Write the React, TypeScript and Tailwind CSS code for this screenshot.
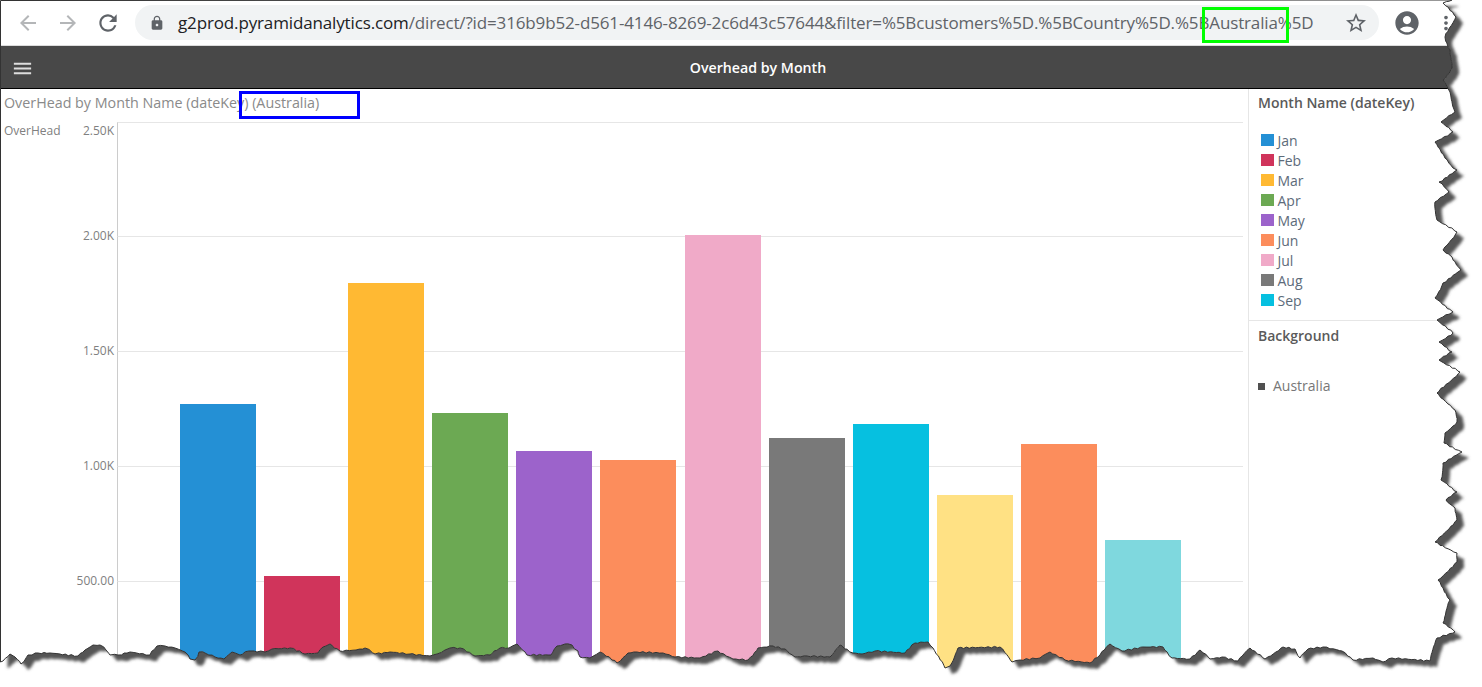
import { MdArrowBack, MdArrowForward, MdRefresh, MdLock, MdStarBorder, MdAccountCircle, MdMoreVert, MdMenu } from 'react-icons/md';

const bars = [
    { month: 'Jan', value: 1270, color: 'bg-[#2490d5]' },
    { month: 'Feb', value: 522, color: 'bg-[#d0345b]' },
    { month: 'Mar', value: 1796, color: 'bg-[#ffb933]' },
    { month: 'Apr', value: 1230, color: 'bg-[#6ca953]' },
    { month: 'May', value: 1065, color: 'bg-[#9c63cb]' },
    { month: 'Jun', value: 1026, color: 'bg-[#fc8d5c]' },
    { month: 'Jul', value: 2004, color: 'bg-[#f0aac8]' },
    { month: 'Aug', value: 1122, color: 'bg-[#797979]' },
    { month: 'Sep', value: 1183, color: 'bg-[#06c0e0]' },
    { month: 'Oct', value: 874, color: 'bg-[#ffe184]' },
    { month: 'Nov', value: 1096, color: 'bg-[#fc8d5c]' },
    { month: 'Dec', value: 678, color: 'bg-[#7fd8de]' },
];

const ticks = [
    { label: '2.50K', rowClass: 'h-[114px]', labelClass: 'mt-[0px]' },
    { label: '2.00K', rowClass: 'h-[115px]', labelClass: '-mt-[9px]' },
    { label: '1.50K', rowClass: 'h-[115px]', labelClass: '-mt-[9px]' },
    { label: '1.00K', rowClass: 'h-[115px]', labelClass: '-mt-[9px]' },
    { label: '500.00', rowClass: 'h-[115px]', labelClass: '-mt-[9px]' },
];

// rough outline of the torn screenshot edge, clockwise from the top right
const tornEdge = [
    [1452, 0], [1443, 3], [1456, 17], [1445, 37], [1450, 50], [1452, 68], [1443, 80], [1450, 92], [1455, 112],
    [1441, 122], [1453, 132], [1435, 142], [1453, 168], [1457, 170], [1439, 182], [1449, 192], [1435, 202],
    [1437, 220], [1457, 232], [1443, 250], [1452, 257], [1461, 270], [1443, 283], [1435, 298], [1453, 312],
    [1437, 320], [1453, 333], [1439, 342], [1452, 352], [1439, 360], [1460, 372], [1437, 393], [1455, 410],
    [1457, 422], [1445, 433], [1444, 443], [1462, 452], [1443, 463], [1441, 480], [1457, 492], [1446, 500],
    [1455, 508], [1457, 520], [1435, 542], [1457, 553], [1457, 562], [1438, 580], [1450, 600], [1443, 623],
    [1455, 632], [1437, 638], [1430, 661], [1392, 658], [1383, 662], [1373, 658], [1353, 660], [1342, 651],
    [1323, 647], [1308, 649], [1300, 658], [1295, 649], [1283, 647], [1265, 659], [1250, 648], [1238, 661],
    [1222, 657], [1210, 659], [1200, 650], [1190, 659], [1172, 658], [1163, 647], [1143, 647], [1122, 651],
    [1110, 644], [1100, 655], [1090, 663], [1065, 660], [1050, 652], [1040, 658], [1020, 660], [1012, 662],
    [1000, 647], [958, 648], [950, 666], [945, 668], [933, 648], [928, 642], [915, 643], [905, 653], [875, 651],
    [862, 654], [853, 653], [840, 645], [830, 657], [807, 656], [795, 657], [785, 649], [773, 646], [758, 648],
    [748, 660], [733, 659], [718, 651], [700, 658], [675, 657], [663, 653], [637, 652], [628, 653], [617, 663],
    [600, 652], [590, 658], [580, 657], [578, 651], [572, 645], [565, 644], [557, 646], [551, 655], [527, 655],
    [517, 644], [509, 648], [500, 648], [490, 655], [475, 656], [460, 648], [450, 648], [445, 650], [437, 654],
    [430, 656], [410, 654], [390, 652], [375, 654], [365, 648], [356, 650], [340, 651], [330, 644], [323, 647],
    [318, 653], [305, 654], [290, 648], [272, 649], [265, 652], [254, 651], [249, 651], [240, 655], [232, 652],
    [224, 659], [215, 657], [205, 653], [199, 652], [195, 660], [190, 659], [185, 652], [175, 648], [165, 646],
    [157, 646], [150, 655], [130, 652], [118, 655], [110, 655], [106, 650], [100, 645], [93, 645], [85, 650],
    [78, 656], [60, 654], [50, 653], [38, 653], [28, 655], [21, 664], [15, 657], [10, 654], [3, 661], [0.5, 662],
];

function buildEdgePath() {
    let d = 'M0.5 0.5';
    let n = 0;
    tornEdge.forEach(([x, y], i) => {
        if (i > 0) {
            const [px, py] = tornEdge[i - 1];
            const steps = Math.floor(Math.hypot(x - px, y - py) / 3);
            for (let s = 1; s < steps; s++) {
                n++;
                const jx = Math.sin(n * 12.9) * 0.7;
                const jy = Math.sin(n * 78.2) * 0.7;
                d += ` L${(px + ((x - px) * s) / steps + jx).toFixed(1)} ${(py + ((y - py) * s) / steps + jy).toFixed(1)}`;
            }
        }
        d += ` L${x} ${y}`;
    });
    return d + ' Z';
}

function TornEdge() {
    const edge = buildEdgePath();
    return (
        <svg className="absolute left-0 top-0 pointer-events-none" width="1482" height="687" viewBox="0 0 1482 687">
            <defs>
                <clipPath id="outside">
                    <path clipRule="evenodd" d={`M0 0H1482V687H0Z ${edge}`} />
                </clipPath>
                <filter id="soft" x="-5%" y="-5%" width="110%" height="110%">
                    <feGaussianBlur stdDeviation="1.8" />
                </filter>
            </defs>
            <path fillRule="evenodd" fill="#ffffff" d={`M0 0H1482V687H0Z ${edge}`} />
            <g clipPath="url(#outside)">
                <path d={edge} fill="#555555" filter="url(#soft)" transform="translate(7 6)" />
            </g>
            <path d={edge} fill="none" stroke="#333333" strokeWidth="1" />
        </svg>
    );
}

function BrowserBar() {
    return (
        <div className="h-[46px] flex items-center border-b border-[#dcdcdc] bg-white text-[#5f6368]">
            <MdArrowBack size={24} className="ml-[16px] text-[#b4b6b8]" />
            <MdArrowForward size={24} className="ml-[16px] text-[#b4b6b8]" />
            <MdRefresh size={26} className="ml-[15px]" />
            <div className="ml-[14px] h-[35px] w-[1244px] rounded-full bg-[#f1f3f4] flex items-center">
                <MdLock size={16} className="ml-[14px]" />
                <div className="ml-[13px] flex-1 whitespace-nowrap text-[17px] tracking-[-0.14px]">
                    <span className="text-[#202124]">g2prod.pyramidanalytics.com</span>
                    <span>/direct/?id=316b9b52-d561-4146-8269-2c6d43c57644&amp;filter=%5Bcustomers%5D.%5BCountry%5D.%5BAustralia%5D</span>
                </div>
                <MdStarBorder size={24} className="mr-[11px]" />
            </div>
            <MdAccountCircle size={28} className="ml-[14px]" />
            <MdMoreVert size={22} className="ml-[14px]" />
        </div>
    );
}

function Chart() {
    return (
        <div className="w-[1248px] shrink-0 pr-[5px]">
            <div className="h-[33px] pt-[4px] pl-[4px] text-[14.3px] leading-[20px] text-[#8a8a8a] whitespace-nowrap">
                OverHead by Month Name (dateKey) (Australia)
            </div>
            <div className="relative">
                <div className="absolute left-[4px] top-[1px] text-[12px] leading-[16px] text-[#808080]">OverHead</div>
                {ticks.map((tick) => (
                    <div key={tick.label} className={`flex ${tick.rowClass}`}>
                        <div className={`w-[117px] pr-[3px] text-right text-[12px] leading-[18px] text-[#808080] ${tick.labelClass}`}>
                            {tick.label}
                        </div>
                        <div className="flex-1 border-l border-t border-l-[#cccccc] border-t-[#e6e6e6]" />
                    </div>
                ))}
                <div className="absolute bottom-0 left-[180px] flex items-end gap-[8.1px]">
                    {bars.map((bar) => (
                        <div
                            key={bar.month}
                            className={`w-[76px] ${bar.color}`}
                            style={{ height: 115 + (bar.value - 500) * 0.23 }}
                        />
                    ))}
                </div>
            </div>
        </div>
    );
}

function Legend() {
    return (
        <div className="flex-1 border-l border-[#e6e6e6]">
            <div className="h-[232px] border-b border-[#e6e6e6]">
                <div className="pl-[9px] pt-[4px] text-[14px] leading-[20px] font-semibold text-[#5a5a5a] whitespace-nowrap">
                    Month Name (dateKey)
                </div>
                <div className="mt-[17px] pl-[12px] flex flex-col">
                    {bars.slice(0, 9).map((bar) => (
                        <div key={bar.month} className="h-[20px] flex items-center gap-[3.5px] text-[14px] text-[#5d6b7a]">
                            <span className={`w-[13px] h-[12px] ${bar.color}`} />
                            {bar.month}
                        </div>
                    ))}
                </div>
            </div>
            <div className="pl-[9px] pt-[5px] text-[14px] leading-[20px] font-semibold text-[#5a5a5a]">Background</div>
            <div className="mt-[30px] pl-[9px] flex items-center gap-[8px] text-[14px] leading-[20px] text-[#777777]">
                <span className="w-[7px] h-[7px] bg-[#505050]" />
                Australia
            </div>
        </div>
    );
}

export default function App() {
    return (
        <div className="relative w-[1482px] h-[687px] overflow-hidden bg-white font-['Open_Sans',sans-serif]">
            <BrowserBar />
            <div className="h-[43px] pt-[2px] flex items-center bg-[#484848] border-b border-black text-white">
                <MdMenu size={23} className="ml-[11px] text-[#dddddd]" />
                <div className="flex-1 text-center text-[14.2px] font-semibold">Overhead by Month</div>
            </div>
            <div className="flex">
                <Chart />
                <Legend />
            </div>
            <div className="absolute left-[239px] top-[91px] w-[121px] h-[28px] border-[3px] border-[#0000ff]" />
            <div className="absolute left-[1202px] top-[7px] w-[87px] h-[36px] border-[3px] border-[#00ff00]" />
            <TornEdge />
        </div>
    );
}
